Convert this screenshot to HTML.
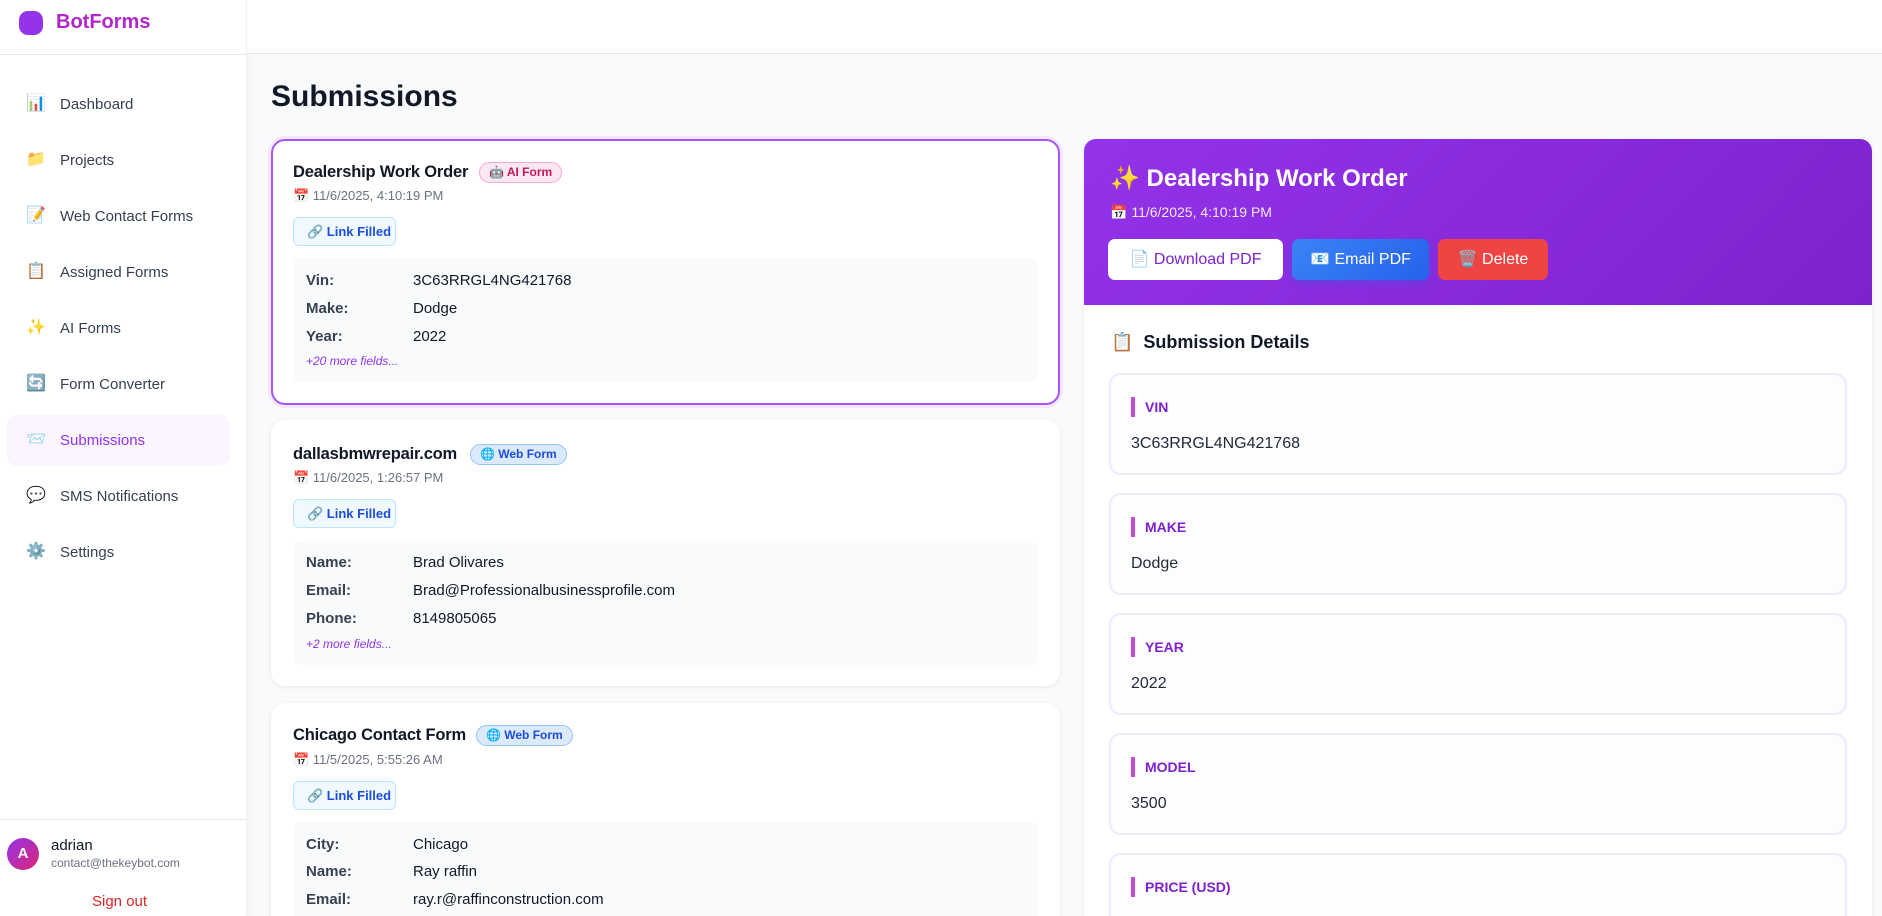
<!DOCTYPE html>
<html><head><meta charset="utf-8"><style>
*{box-sizing:border-box;margin:0;padding:0}
html,body{width:1882px;height:916px;overflow:hidden}
body{background:#f8fafc;font-family:"Liberation Sans","Noto Sans CJK JP",sans-serif;color:#111827}
#wrap{position:relative;width:1882px;height:916px;overflow:hidden}
.abs{position:absolute}
.side{left:0;top:0;width:247px;height:916px;background:#fff;box-shadow:2px 0 8px rgba(0,0,0,.04);border-right:1px solid #f1f1f4}
.top{left:247px;top:0;right:0;height:54px;background:#fff;border-bottom:1px solid #e5e7eb}
.logo{left:56px;top:11px;font-size:20px;font-weight:bold;color:#b026c9}
.nav{left:60px;font-size:15px;color:#374151}
.ico{left:26px;width:18px;height:18px;font-size:16px;line-height:18px;text-align:center}
.card{background:#fff;border-radius:14px;box-shadow:0 1px 4px rgba(0,0,0,.08)}
.ct{font-size:16.5px;font-weight:bold;color:#111827;letter-spacing:-0.2px}
.date{font-size:13px;color:#6b7280}
.lf{width:103px;height:29px;border:1px solid #bae6fd;background:#f0f9ff;border-radius:6px;font-size:13px;font-weight:bold;color:#1d4ed8;line-height:27px;padding-left:13px}
.box{background:#f8fafc;border-radius:8px}
.row{font-size:15px;color:#111827}
.lab{font-weight:bold;color:#374151}
.more{font-size:12px;font-style:italic;color:#9333ea}
.badge{height:21px;border-radius:11px;font-size:12px;font-weight:bold;line-height:19px;padding:0 9px}
.fb{left:1109px;width:738px;height:102px;border:2px solid #ede9fe;border-radius:12px;background:#fdfcff}
.fl{left:20px;top:22px;font-size:14px;font-weight:bold;color:#7e22ce;padding-left:10px;border-left:4px solid #c04fd4;line-height:20px}
.fv{left:20px;top:60px;font-size:16px;color:#1f2937}
.btn{top:239px;height:41px;border-radius:7px;font-size:16px;line-height:41px;text-align:center}
</style></head><body><div id="wrap">
<div class="abs side"></div>
<div class="abs top"></div>
<div class="abs" style="left:0;top:54px;width:247px;border-top:1px solid #e5e7eb"></div>
<div class="abs" style="left:19px;top:11px;width:24px;height:24px;border-radius:9px;background:#9333ea"></div>
<div class="abs logo">BotForms</div>

<div class="abs" style="left:7px;top:415px;width:223px;height:51px;border-radius:10px;background:#faf5ff"></div>
<div class="abs ico" style="top:95px">📊</div><div class="abs nav" style="top:96px">Dashboard</div>
<div class="abs ico" style="top:151px">📁</div><div class="abs nav" style="top:152px">Projects</div>
<div class="abs ico" style="top:207px">📝</div><div class="abs nav" style="top:208px">Web Contact Forms</div>
<div class="abs ico" style="top:263px">📋</div><div class="abs nav" style="top:264px">Assigned Forms</div>
<div class="abs ico" style="top:319px">✨</div><div class="abs nav" style="top:320px">AI Forms</div>
<div class="abs ico" style="top:375px">🔄</div><div class="abs nav" style="top:376px">Form Converter</div>
<div class="abs ico" style="top:431px">📨</div><div class="abs nav" style="top:432px;color:#9333ea;font-weight:500">Submissions</div>
<div class="abs ico" style="top:487px">💬</div><div class="abs nav" style="top:488px">SMS Notifications</div>
<div class="abs ico" style="top:543px">⚙️</div><div class="abs nav" style="top:544px">Settings</div>

<div class="abs" style="left:0;top:819px;width:247px;border-top:1px solid #e5e7eb"></div>
<div class="abs" style="left:7px;top:838px;width:32px;height:32px;border-radius:50%;background:linear-gradient(135deg,#9333ea,#db2777);color:#fff;font-weight:bold;font-size:15px;text-align:center;line-height:32px">A</div>
<div class="abs" style="left:51px;top:837px;font-size:15px;color:#111827">adrian</div>
<div class="abs" style="left:51px;top:856px;font-size:12px;color:#6b7280">contact@thekeybot.com</div>
<div class="abs" style="left:92px;top:893px;font-size:15px;color:#dc2626">Sign out</div>

<div class="abs" style="left:271px;top:80px;font-size:30px;font-weight:bold;color:#111827">Submissions</div>

<!-- card 1 -->
<div class="abs card" style="left:271px;top:139px;width:789px;height:266px;border:2px solid #a855f7;box-shadow:0 0 0 3px #f3e8ff"></div>
<div class="abs ct" style="left:293px;top:163px">Dealership Work Order</div>
<div class="abs badge" style="left:479px;top:162px;background:#fce7f3;border:1px solid #f9a8d4;color:#be185d">🤖 AI Form</div>
<div class="abs date" style="left:293px;top:188px">📅 11/6/2025, 4:10:19 PM</div>
<div class="abs lf" style="left:293px;top:217px">🔗 Link Filled</div>
<div class="abs box" style="left:293px;top:258px;width:745px;height:124px"></div>
<div class="abs row lab" style="left:306px;top:272px">Vin:</div><div class="abs row" style="left:413px;top:272px">3C63RRGL4NG421768</div>
<div class="abs row lab" style="left:306px;top:300px">Make:</div><div class="abs row" style="left:413px;top:300px">Dodge</div>
<div class="abs row lab" style="left:306px;top:328px">Year:</div><div class="abs row" style="left:413px;top:328px">2022</div>
<div class="abs more" style="left:306px;top:354px">+20 more fields...</div>

<!-- card 2 -->
<div class="abs card" style="left:271px;top:420px;width:789px;height:266px"></div>
<div class="abs ct" style="left:293px;top:445px">dallasbmwrepair.com</div>
<div class="abs badge" style="left:470px;top:444px;background:#dbeafe;border:1px solid #93c5fd;color:#1d4ed8">🌐 Web Form</div>
<div class="abs date" style="left:293px;top:470px">📅 11/6/2025, 1:26:57 PM</div>
<div class="abs lf" style="left:293px;top:499px">🔗 Link Filled</div>
<div class="abs box" style="left:293px;top:541px;width:745px;height:124px"></div>
<div class="abs row lab" style="left:306px;top:554px">Name:</div><div class="abs row" style="left:413px;top:554px">Brad Olivares</div>
<div class="abs row lab" style="left:306px;top:582px">Email:</div><div class="abs row" style="left:413px;top:582px">Brad@Professionalbusinessprofile.com</div>
<div class="abs row lab" style="left:306px;top:610px">Phone:</div><div class="abs row" style="left:413px;top:610px">8149805065</div>
<div class="abs more" style="left:306px;top:637px">+2 more fields...</div>

<!-- card 3 -->
<div class="abs card" style="left:271px;top:703px;width:789px;height:260px"></div>
<div class="abs ct" style="left:293px;top:726px">Chicago Contact Form</div>
<div class="abs badge" style="left:476px;top:725px;background:#dbeafe;border:1px solid #93c5fd;color:#1d4ed8">🌐 Web Form</div>
<div class="abs date" style="left:293px;top:752px">📅 11/5/2025, 5:55:26 AM</div>
<div class="abs lf" style="left:293px;top:781px">🔗 Link Filled</div>
<div class="abs box" style="left:293px;top:822px;width:745px;height:124px"></div>
<div class="abs row lab" style="left:306px;top:836px">City:</div><div class="abs row" style="left:413px;top:836px">Chicago</div>
<div class="abs row lab" style="left:306px;top:863px">Name:</div><div class="abs row" style="left:413px;top:863px">Ray raffin</div>
<div class="abs row lab" style="left:306px;top:891px">Email:</div><div class="abs row" style="left:413px;top:891px">ray.r@raffinconstruction.com</div>

<!-- right panel -->
<div class="abs card" style="left:1084px;top:139px;width:788px;height:800px"></div>
<div class="abs" style="left:1084px;top:139px;width:788px;height:166px;border-radius:12px 12px 0 0;background:linear-gradient(135deg,#9333ea,#7e22ce)"></div>
<div class="abs" style="left:1110px;top:164px;font-size:24px;font-weight:bold;color:#fff">✨ Dealership Work Order</div>
<div class="abs" style="left:1110px;top:204px;font-size:14px;color:#f3e8ff">📅 11/6/2025, 4:10:19 PM</div>
<div class="abs btn" style="left:1108px;width:175px;background:#fff;color:#7e22ce">📄 Download PDF</div>
<div class="abs btn" style="left:1292px;width:137px;background:linear-gradient(135deg,#3b82f6,#2563eb);color:#fff;box-shadow:0 3px 8px rgba(37,99,235,.35)">📧 Email PDF</div>
<div class="abs btn" style="left:1438px;width:110px;background:#ef4444;color:#fff">🗑️ Delete</div>

<div class="abs" style="left:1111px;top:332px;font-size:18px;font-weight:bold;color:#111827">📋&nbsp; Submission Details</div>

<div class="abs fb" style="top:373px"><div class="abs fl">VIN</div><div class="abs fv">3C63RRGL4NG421768</div></div>
<div class="abs fb" style="top:493px"><div class="abs fl">MAKE</div><div class="abs fv">Dodge</div></div>
<div class="abs fb" style="top:613px"><div class="abs fl">YEAR</div><div class="abs fv">2022</div></div>
<div class="abs fb" style="top:733px"><div class="abs fl">MODEL</div><div class="abs fv">3500</div></div>
<div class="abs fb" style="top:853px"><div class="abs fl">PRICE (USD)</div></div>
</div></body></html>
